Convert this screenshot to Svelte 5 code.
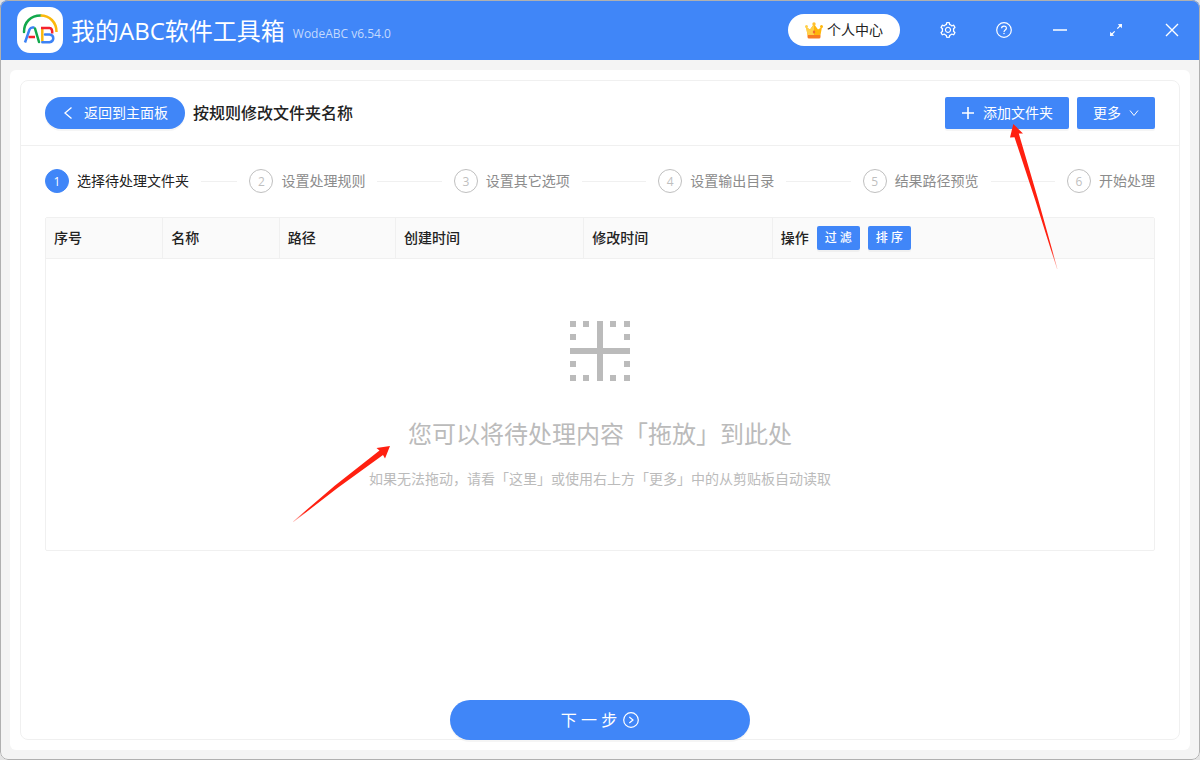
<script>
  const steps = ['选择待处理文件夹', '设置处理规则', '设置其它选项', '设置输出目录', '结果路径预览', '开始处理'];
  const columns = [
    { title: '序号', width: 10.5 },
    { title: '名称', width: 10.5 },
    { title: '路径', width: 10.5 },
    { title: '创建时间', width: 17 },
    { title: '修改时间', width: 17 }
  ];
  const dots = [
    [0, 0], [13, 0], [40, 0], [54, 0],
    [0, 13], [54, 13],
    [0, 40], [54, 40],
    [0, 54], [13, 54], [40, 54], [54, 54]
  ];
  let current = $state(0);
</script>

<div class="window">
  <header class="titlebar">
    <svg class="logo" viewBox="0 0 46 46" aria-hidden="true">
      <rect width="46" height="46" rx="13" fill="#fff" />
      <g fill="none" stroke-width="2.500" stroke-linecap="round">
        <path d="M7 25C7 15 14 8.500 23.500 8.500" stroke="#12a84c" />
        <path d="M23.500 8.500C32.500 8.500 39.500 15 39.500 25" stroke="#fbb90d" stroke-linecap="butt" />
        <path d="M8 35.500L12.500 22.500Q13.500 20.500 15.500 20.500H17.500" stroke="#3c82f5" stroke-linecap="butt" />
        <path d="M11.500 30H18" stroke="#f5222d" stroke-linecap="butt" />
        <path d="M18 21.500L22 35" stroke="#12a84c" />
        <path d="M25.300 22V34" stroke="#fbb90d" />
        <path d="M24 21H32.500Q35.500 21 35.200 26.500" stroke="#f5222d" stroke-linecap="butt" />
        <path d="M28 27.500H32.500Q36.300 27.800 36.300 31.300T32.500 35.200H25.300" stroke="#3c82f5" />
      </g>
    </svg>
    <span class="app-name">我的ABC软件工具箱</span>
    <span class="version">WodeABC v6.54.0</span>
    <nav class="actions">
      <button class="account">
        <svg width="18" height="17" viewBox="0 0 18 17" aria-hidden="true">
          <path d="M1 5L5 7.500L9 2L13 7.500L17 5L15.500 13H2.500Z" fill="#ffb60a" />
          <path d="M1 5L5 7.500L9 2V13H2.500Z" fill="#ffcf4a" />
          <circle cx="1.500" cy="4.500" r="1.500" fill="#ffcf4a" />
          <circle cx="9" cy="2" r="1.700" fill="#ffc02e" />
          <circle cx="16.500" cy="4.500" r="1.500" fill="#ffb60a" />
          <path d="M9 8L10.300 10L9 12L7.700 10Z" fill="#f0642d" />
          <path d="M2.500 13H15.500V15Q15.500 16.500 14 16.500H4Q2.500 16.500 2.500 15Z" fill="#f77b22" />
        </svg>
        个人中心
      </button>
      <button class="tool" aria-label="设置">
        <svg width="16" height="16" viewBox="64 64 896 896" fill="currentColor"><path d="M924.8 625.7l-65.5-56c3.100-19 4.700-38.400 4.700-57.800s-1.600-38.800-4.700-57.800l65.500-56a32.030 32.030 0 009.300-35.200l-.9-2.600a443.740 443.740 0 00-79.700-137.900l-1.800-2.100a32.120 32.120 0 00-35.100-9.500l-81.300 28.900c-30-24.600-63.500-44-99.700-57.600l-15.700-85a32.050 32.050 0 00-25.800-25.700l-2.700-.5c-52.100-9.400-106.900-9.400-159 0l-2.700.5a32.050 32.050 0 00-25.800 25.700l-15.800 85.400a351.860 351.860 0 00-99 57.400l-81.900-29.100a32 32 0 00-35.100 9.500l-1.800 2.100a446.020 446.020 0 00-79.700 137.900l-.9 2.600c-4.500 12.500-.8 26.500 9.300 35.200l66.300 56.600c-3.100 18.800-4.600 38-4.600 57.100 0 19.200 1.500 38.400 4.600 57.100L99 625.500a32.030 32.030 0 00-9.300 35.200l.9 2.600c18.100 50.400 44.900 96.900 79.700 137.900l1.800 2.100a32.120 32.120 0 0035.100 9.500l81.900-29.100c29.800 24.500 63.100 43.900 99 57.400l15.800 85.400a32.050 32.050 0 0025.800 25.700l2.700.5a449.400 449.400 0 00159 0l2.700-.5a32.050 32.050 0 0025.800-25.700l15.700-85a350 350 0 0099.700-57.600l81.300 28.900a32 32 0 0035.100-9.500l1.800-2.100c34.800-41.100 61.600-87.500 79.700-137.900l.9-2.600c4.500-12.300.8-26.300-9.300-35zM788.300 465.900c2.500 15.100 3.800 30.600 3.800 46.100s-1.300 31-3.800 46.100l-6.600 40.100 74.700 63.900a370.030 370.030 0 01-42.600 73.600L721 702.800l-31.400 25.800c-23.900 19.600-50.500 35-79.300 45.800l-38.100 14.300-17.900 97a377.500 377.500 0 01-85 0l-17.900-97.200-37.800-14.500c-28.500-10.800-55-26.200-78.700-45.700l-31.400-25.900-93.400 33.200c-17-22.900-31.200-47.600-42.600-73.600l75.500-64.500-6.500-40c-2.400-14.900-3.700-30.300-3.700-45.500 0-15.300 1.200-30.600 3.700-45.500l6.500-40-75.500-64.500c11.300-26.100 25.600-50.700 42.600-73.600l93.400 33.200 31.400-25.900c23.700-19.500 50.200-34.900 78.700-45.700l37.900-14.300 17.900-97.200c28.100-3.200 56.800-3.200 85 0l17.900 97 38.100 14.300c28.700 10.800 55.400 26.200 79.300 45.800l31.400 25.800 92.800-32.900c17 22.900 31.200 47.600 42.600 73.600L781.800 426l6.500 39.900zM512 326c-97.200 0-176 78.800-176 176s78.800 176 176 176 176-78.800 176-176-78.800-176-176-176zm79.200 255.200A111.600 111.600 0 01512 614c-29.900 0-58-11.700-79.200-32.800A111.600 111.600 0 01400 502c0-29.900 11.700-58 32.800-79.200C454 401.600 482.100 390 512 390c29.900 0 58 11.600 79.200 32.800A111.600 111.600 0 01624 502c0 29.900-11.700 58-32.800 79.200z" /></svg>
      </button>
      <button class="tool" aria-label="帮助">
        <svg width="16" height="16" viewBox="0 0 16 16" fill="none" stroke="currentColor" stroke-width="1.200">
          <circle cx="8" cy="8" r="7.300" />
          <path d="M5.600 6.300C5.600 3.300 10.400 3.300 10.400 6.200C10.400 8 8 7.900 8 9.900" />
          <circle cx="8" cy="11.600" r=".75" fill="currentColor" stroke="none" />
        </svg>
      </button>
      <button class="tool" aria-label="最小化">
        <svg width="14" height="14" viewBox="0 0 14 14" fill="none" stroke="currentColor" stroke-width="1.500"><path d="M0 7H14" /></svg>
      </button>
      <button class="tool" aria-label="最大化">
        <svg width="14" height="14" viewBox="0 0 14 14" fill="none" stroke="currentColor" stroke-width="1.200">
          <path d="M8.300 5.700L12 2M2 12L5.700 8.300" />
          <path d="M8.800 1.200L13 1L12.800 5.200ZM1.200 8.800L1 13L5.200 12.800Z" fill="currentColor" stroke="none" />
        </svg>
      </button>
      <button class="tool" aria-label="关闭">
        <svg width="14" height="14" viewBox="0 0 14 14" fill="none" stroke="currentColor" stroke-width="1.400"><path d="M1 1L13 13M13 1L1 13" /></svg>
      </button>
    </nav>
  </header>

  <main class="page">
    <section class="card">
      <div class="card-head">
        <button class="primary back">
          <svg width="14" height="14" viewBox="0 0 14 14" fill="none" stroke="currentColor" stroke-width="1.300"><path d="M9.500 1.500L3 7L9.500 12.500" /></svg>
          返回到主面板
        </button>
        <h1>按规则修改文件夹名称</h1>
        <div class="head-actions">
          <button class="primary add">
            <svg width="14" height="14" viewBox="0 0 14 14" fill="none" stroke="currentColor" stroke-width="1.600"><path d="M7 1V13M1 7H13" /></svg>
            添加文件夹
          </button>
          <button class="primary more">
            更多
            <svg width="10" height="10" viewBox="0 0 10 10" fill="none" stroke="currentColor"><path d="M1 2.500L5 7.500L9 2.500" /></svg>
          </button>
          <svg class="arrow arrow-add" width="52" height="148" viewBox="0 0 52 148" aria-hidden="true">
            <defs>
              <linearGradient id="fade-up" gradientUnits="userSpaceOnUse" x1="49" y1="147" x2="43" y2="127">
                <stop offset="0" stop-color="#ff2010" stop-opacity=".25" />
                <stop offset="1" stop-color="#ff2010" />
              </linearGradient>
            </defs>
            <path d="M5.300 2L15 11.500L10.800 11.500L30 77L49.500 147H49L27.500 79L6.500 15.300L2 15.500Z" fill="url(#fade-up)" />
          </svg>
        </div>
      </div>

      <div class="card-body">
        <ol class="steps">
          {#each steps as step, i}
            <li class:active={i === current}>
              <span class="dot">{i + 1}</span>
              <span class="step-name">{step}</span>
              {#if i < steps.length - 1}<span class="line"></span>{/if}
            </li>
          {/each}
        </ol>

        <table>
          <thead>
            <tr>
              {#each columns as col}
                <th scope="col" style="width: {col.width}%">{col.title}</th>
              {/each}
              <th scope="col">
                <div class="ops">
                  操作
                  <button class="primary small">过 滤</button>
                  <button class="primary small">排 序</button>
                </div>
              </th>
            </tr>
          </thead>
          <tbody>
            <tr>
              <td colspan="6">
                <div class="drop">
                  <svg class="drop-icon" width="60" height="60" viewBox="0 0 60 60" fill="currentColor" aria-hidden="true">
                    {#each dots as [x, y]}
                      <rect {x} {y} width="6" height="6" />
                    {/each}
                    <path d="M27 0H33V27H60V33H33V60H27V33H0V27H27Z" />
                  </svg>
                  <p class="drop-title">您可以将待处理内容「拖放」到此处</p>
                  <p class="drop-hint">如果无法拖动，请看「这里」或使用右上方「更多」中的从剪贴板自动读取</p>
                  <svg class="arrow arrow-drop" width="100" height="80" viewBox="0 0 100 80" aria-hidden="true">
                    <defs>
                      <linearGradient id="fade-side" gradientUnits="userSpaceOnUse" x1="1" y1="78" x2="14" y2="68">
                        <stop offset="0" stop-color="#ff2010" stop-opacity=".25" />
                        <stop offset="1" stop-color="#ff2010" />
                      </linearGradient>
                    </defs>
                    <path d="M98 2L84.500 4L87.500 6.500L43 41.500L1 77.500L1.500 78L45.500 44L91 11L93 14.500Z" fill="url(#fade-side)" />
                  </svg>
                </div>
              </td>
            </tr>
          </tbody>
        </table>

        <button class="primary next">
          下 一 步
          <svg width="16" height="16" viewBox="0 0 16 16" fill="none" stroke="currentColor" stroke-width="1.200">
            <circle cx="8" cy="8" r="7.300" />
            <path d="M6.300 5L10 8L6.300 11" />
          </svg>
        </button>
      </div>
    </section>
  </main>
</div>

<style>
  :global(body) {
    margin: 0;
    background: #e4e4e4;
  }
  .window {
    position: relative;
    box-sizing: border-box;
    display: flex;
    flex-direction: column;
    min-height: 100vh;
    overflow: hidden;
    border-radius: 8px;
    background: #f4f4f4;
    color: #222;
    font: 14px/22px "Open Sans", "Noto Sans CJK SC", sans-serif;
  }
  .window::after {
    content: "";
    position: absolute;
    inset: 0;
    border: 1px solid #b0b0b0;
    border-radius: 8px;
    pointer-events: none;
  }
  button {
    display: inline-flex;
    align-items: center;
    justify-content: center;
    margin: 0;
    padding: 0;
    border: 0;
    font: inherit;
    white-space: nowrap;
    cursor: pointer;
  }
  svg {
    flex: none;
  }

  .titlebar {
    display: flex;
    align-items: center;
    height: 60px;
    padding-left: 17px;
    background: #4086f8;
    color: #fff;
  }
  .logo {
    width: 46px;
    height: 46px;
  }
  .app-name {
    margin: 2px 0 0 8px;
    font-size: 24px;
    line-height: 36px;
  }
  .version {
    margin: 8px 0 0 8px;
    color: #c4dafd;
    font-size: 12px;
    line-height: 16px;
  }
  .actions {
    display: flex;
    align-items: center;
    margin-left: auto;
  }
  .account {
    gap: 4px;
    height: 32px;
    margin-right: 20px;
    padding: 0 17px;
    border-radius: 16px;
    background: #fff;
    color: #222;
  }
  .tool {
    width: 56px;
    height: 60px;
    background: none;
    color: #fff;
  }

  .page {
    display: flex;
    flex: 1;
    margin: 10px;
    padding: 10px;
    border-radius: 6px;
    background: #fff;
  }
  .card {
    display: flex;
    flex: 1;
    flex-direction: column;
    border: 1px solid #f0f0f0;
    border-radius: 8px;
  }
  .card-head {
    display: flex;
    align-items: center;
    gap: 8px;
    padding: 16px 24px;
    border-bottom: 1px solid #f0f0f0;
  }
  .primary {
    height: 32px;
    border-radius: 2px;
    background: #4086f8;
    color: #fff;
    box-shadow: 0 2px 0 rgba(0, 0, 0, 0.04);
  }
  .back {
    gap: 8px;
    padding: 0 17px;
    border-radius: 16px;
  }
  h1 {
    margin: 0;
    font-size: 16px;
    font-weight: 500;
    line-height: 24px;
  }
  .head-actions {
    position: relative;
    display: flex;
    gap: 8px;
    margin-left: auto;
  }
  .add {
    gap: 8px;
    padding: 0 16px;
  }
  .more {
    gap: 8px;
    padding: 0 16px;
  }
  .arrow {
    position: absolute;
    pointer-events: none;
  }
  .arrow-add {
    top: 25px;
    right: 95px;
  }

  .card-body {
    display: flex;
    flex: 1;
    flex-direction: column;
    padding: 23px 24px 0;
  }
  .steps {
    display: flex;
    margin: 0 0 24px;
    padding: 0;
    list-style: none;
    color: #8c8c8c;
  }
  .steps li {
    display: flex;
    flex: 1;
    align-items: center;
    white-space: nowrap;
  }
  .steps li:last-child {
    flex: none;
  }
  .steps .active {
    color: #222;
  }
  .dot {
    box-sizing: border-box;
    width: 24px;
    height: 24px;
    margin-right: 8px;
    border: 1px solid #bfbfbf;
    border-radius: 12px;
    color: #bfbfbf;
    font-size: 12px;
    line-height: 24px;
    text-align: center;
  }
  .active .dot {
    border-color: #4086f8;
    background: #4086f8;
    color: #fff;
  }
  .line {
    flex: 1;
    height: 1px;
    margin: 0 12px;
    background: #f0f0f0;
  }

  table {
    width: 100%;
    table-layout: fixed;
    border: 1px solid #f0f0f0;
    border-radius: 2px;
    border-spacing: 0;
  }
  th {
    box-sizing: border-box;
    height: 41px;
    padding: 0 8px;
    border-bottom: 1px solid #f0f0f0;
    background: #fafafa;
    font-weight: 500;
    text-align: left;
  }
  th + th {
    border-left: 1px solid #f0f0f0;
  }
  .ops {
    display: flex;
    align-items: center;
    gap: 8px;
  }
  .small {
    height: 24px;
    padding: 0 8px;
    font-size: 12px;
  }
  td {
    padding: 0;
  }
  .drop {
    position: relative;
    display: flex;
    flex-direction: column;
    align-items: center;
    padding: 62px 0 60px;
    color: #bbb;
  }
  .drop p {
    margin: 0;
  }
  .drop .drop-title {
    margin: 35px 0 16px;
    font-size: 24px;
    line-height: 36px;
  }
  .arrow-drop {
    top: 185px;
    left: calc(50% - 308px);
  }

  .next {
    align-self: center;
    gap: 6px;
    width: 300px;
    height: 40px;
    margin: auto 0 -1px;
    border-radius: 20px;
    font-size: 16px;
  }
</style>
